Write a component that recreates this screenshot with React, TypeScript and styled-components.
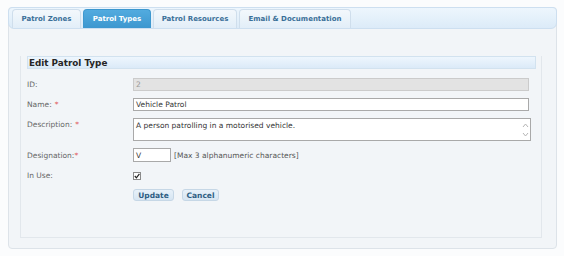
import styled, { createGlobalStyle } from 'styled-components';

const GlobalStyle = createGlobalStyle`
  html, body {
    margin: 0;
    padding: 0;
    background: #fbfcfd;
  }
  body {
    font-family: 'DejaVu Sans', Verdana, sans-serif;
    font-size: 7.5px;
    color: #333;
  }
`;

const Page = styled.div`
  width: 564px;
  height: 256px;
  padding: 7px 7px 0 8px;
  box-sizing: border-box;
`;

const Panel = styled.div`
  width: 549px;
  height: 242px;
  box-sizing: border-box;
  background: #f2f5f8;
  border: 1px solid #dde3e9;
  border-radius: 4px;
  display: flex;
  flex-direction: column;
`;

const TabBar = styled.div`
  height: 22px;
  box-sizing: border-box;
  margin: -1px -1px 0 -1px;
  padding: 3px 0 0 3px;
  display: flex;
  gap: 2px;
  align-items: flex-end;
  background: linear-gradient(#edf6fd, #dcebf8);
  border: 1px solid #cddff0;
  border-radius: 4px 4px 6px 6px;
`;

const Tab = styled.div<{ $active?: boolean; $width: number }>`
  width: ${(p) => p.$width}px;
  height: 19px;
  box-sizing: border-box;
  display: flex;
  align-items: center;
  justify-content: center;
  font-weight: bold;
  font-size: 7px;
  border-radius: 4px 4px 0 0;
  border: 1px solid ${(p) => (p.$active ? '#3e98cf' : '#cfdeec')};
  border-bottom: none;
  color: ${(p) => (p.$active ? '#ffffff' : '#3a6f98')};
  background: ${(p) =>
    p.$active ? 'linear-gradient(#52abdf, #3d97cf)' : 'linear-gradient(#f3f8fc, #e2eef8)'};
`;

const Fieldset = styled.div`
  margin: 27px 0 0 11px;
  width: 522px;
  height: 182px;
  box-sizing: border-box;
  border: 1px solid #e2e7ec;
  border-top: none;
  padding: 0 5px 0 6px;
`;

const Legend = styled.div`
  height: 13px;
  box-sizing: border-box;
  padding-left: 1px;
  display: flex;
  align-items: center;
  font-size: 8.8px;
  font-weight: bold;
  color: #262626;
  background: linear-gradient(#eef6fd, #dbeaf8);
  border: 1px solid #d2e2ef;
`;

const Form = styled.div`
  margin-top: 9px;
  display: grid;
  grid-template-columns: 106px 396px;
  grid-template-rows: 13px 13px 23px 14px 13px 13px;
  row-gap: 7px;
`;

const Label = styled.div<{ $top?: boolean }>`
  display: flex;
  align-items: ${(p) => (p.$top ? 'flex-start' : 'center')};
  padding-top: ${(p) => (p.$top ? '2px' : '0')};
  color: #666;
`;

const Req = styled.span<{ $tight?: boolean }>`
  color: #e0585a;
  margin-left: ${(p) => (p.$tight ? '0' : '3px')};
`;

const TextInput = styled.div<{ $disabled?: boolean; $width?: number }>`
  width: ${(p) => (p.$width ? `${p.$width}px` : '100%')};
  height: 100%;
  box-sizing: border-box;
  border: 1px solid ${(p) => (p.$disabled ? '#cbcbcb' : '#a9a9a9')};
  background: ${(p) => (p.$disabled ? '#e3e3e3' : '#ffffff')};
  color: ${(p) => (p.$disabled ? '#999' : '#333')};
  padding-left: 2px;
  display: flex;
  align-items: center;
`;

const TextArea = styled.div`
  width: 398px;
  height: 100%;
  box-sizing: border-box;
  border: 1px solid #a9a9a9;
  background: #fff;
  display: flex;
  color: #333;
`;

const AreaText = styled.div`
  flex: 1;
  padding: 2px 2px;
`;

const ScrollGutter = styled.div`
  width: 10px;
  display: flex;
  align-items: center;
  justify-content: center;
`;

const Inline = styled.div`
  display: flex;
  align-items: stretch;
  gap: 3px;
`;

const Hint = styled.span`
  display: flex;
  align-items: center;
  color: #555;
`;

const CheckCell = styled.div`
  display: flex;
  align-items: center;
`;

const Check = styled.span`
  width: 8px;
  height: 8px;
  box-sizing: border-box;
  border: 1px solid #8a8a8a;
  background: #fff;
  display: flex;
  align-items: center;
  justify-content: center;
`;

const Buttons = styled.div`
  display: flex;
  gap: 8px;
`;

const Button = styled.div<{ $width: number }>`
  width: ${(p) => p.$width}px;
  height: 12px;
  box-sizing: border-box;
  display: flex;
  align-items: center;
  justify-content: center;
  font-weight: bold;
  font-size: 7.5px;
  color: #2f5e83;
  background: linear-gradient(#e8f1f9, #d6e5f2);
  border: 1px solid #c6d7e6;
  border-radius: 3px;
`;

const tabs = [
  { label: 'Patrol Zones', width: 69 },
  { label: 'Patrol Types', width: 68, active: true },
  { label: 'Patrol Resources', width: 84 },
  { label: 'Email & Documentation', width: 112 },
];

export default function App() {
  return (
    <Page>
      <GlobalStyle />
      <Panel>
        <TabBar>
          {tabs.map((t) => (
            <Tab key={t.label} $active={t.active} $width={t.width}>
              {t.label}
            </Tab>
          ))}
        </TabBar>
        <Fieldset>
          <Legend>Edit Patrol Type</Legend>
          <Form>
            <Label>ID:</Label>
            <TextInput $disabled>2</TextInput>

            <Label>
              Name:<Req>*</Req>
            </Label>
            <TextInput>Vehicle Patrol</TextInput>

            <Label $top>
              Description:<Req>*</Req>
            </Label>
            <TextArea>
              <AreaText>A person patrolling in a motorised vehicle.</AreaText>
              <ScrollGutter>
                <svg width="7" height="18" viewBox="0 0 7 18">
                  <path d="M1 6 L3.5 3 L6 6" fill="none" stroke="#b5b5b5" strokeWidth="1" />
                  <path d="M1 12 L3.5 15 L6 12" fill="none" stroke="#b5b5b5" strokeWidth="1" />
                </svg>
              </ScrollGutter>
            </TextArea>

            <Label>
              Designation:<Req $tight>*</Req>
            </Label>
            <Inline>
              <TextInput $width={38}>V</TextInput>
              <Hint>[Max 3 alphanumeric characters]</Hint>
            </Inline>

            <Label>In Use:</Label>
            <CheckCell>
              <Check>
                <svg width="6" height="6" viewBox="0 0 6 6">
                  <path d="M0.8 3 L2.4 4.8 L5.4 0.8" fill="none" stroke="#222" strokeWidth="1.2" />
                </svg>
              </Check>
            </CheckCell>

            <div />
            <Buttons>
              <Button $width={41}>Update</Button>
              <Button $width={37}>Cancel</Button>
            </Buttons>
          </Form>
        </Fieldset>
      </Panel>
    </Page>
  );
}
